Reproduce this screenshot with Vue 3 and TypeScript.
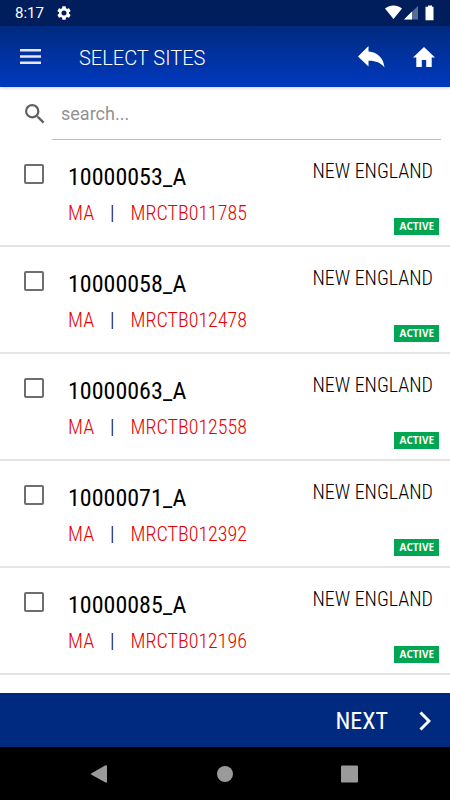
<script setup lang="ts">
import { ref } from 'vue'

interface Site {
  id: string
  state: string
  code: string
  region: string
  status: string
  selected: boolean
}

const query = ref('')
const sites = ref<Site[]>([
  { id: '10000053_A', state: 'MA', code: 'MRCTB011785', region: 'NEW ENGLAND', status: 'ACTIVE', selected: false },
  { id: '10000058_A', state: 'MA', code: 'MRCTB012478', region: 'NEW ENGLAND', status: 'ACTIVE', selected: false },
  { id: '10000063_A', state: 'MA', code: 'MRCTB012558', region: 'NEW ENGLAND', status: 'ACTIVE', selected: false },
  { id: '10000071_A', state: 'MA', code: 'MRCTB012392', region: 'NEW ENGLAND', status: 'ACTIVE', selected: false },
  { id: '10000085_A', state: 'MA', code: 'MRCTB012196', region: 'NEW ENGLAND', status: 'ACTIVE', selected: false },
])
</script>

<template>
  <div class="screen">
    <div class="status-bar">
      <span class="clock">8:17</span>
      <svg class="gear" viewBox="2 2 20 20" aria-hidden="true">
        <path d="M19.14 12.94c.04-.3.06-.61.06-.94 0-.32-.02-.64-.07-.94l2.03-1.58c.18-.14.23-.41.12-.61l-1.92-3.32c-.12-.22-.37-.29-.59-.22l-2.39.96c-.5-.38-1.03-.7-1.62-.94l-.36-2.54c-.04-.24-.24-.41-.48-.41h-3.84c-.24 0-.43.17-.47.41l-.36 2.54c-.59.24-1.13.57-1.62.94l-2.39-.96c-.22-.08-.47 0-.59.22L2.74 8.87c-.12.21-.08.47.12.61l2.03 1.58c-.05.3-.09.63-.09.94s.02.64.07.94l-2.03 1.58c-.18.14-.23.41-.12.61l1.92 3.32c.12.22.37.29.59.22l2.39-.96c.5.38 1.03.7 1.62.94l.36 2.54c.05.24.24.41.48.41h3.84c.24 0 .44-.17.47-.41l.36-2.54c.59-.24 1.13-.56 1.62-.94l2.39.96c.22.08.47 0 .59-.22l1.92-3.32c.12-.22.07-.47-.12-.61l-2.01-1.58zM12 15.6A3.6 3.6 0 1 1 12 8.4a3.6 3.6 0 0 1 0 7.2z" />
      </svg>
      <svg class="signals" viewBox="0 0 50 16" aria-hidden="true">
        <path d="M0 3.500C5 -.5 12 -.5 17 3.500L8.500 14z" />
        <path d="M19 14.500L33 1v13.500z" opacity=".35" />
        <path d="M19 14.500L27 6.500v8z" />
        <path d="M43 .5h4v1.300h1.500v13.500h-8V1.800H43z" />
      </svg>
    </div>

    <header class="app-bar">
      <button class="icon-button" type="button" aria-label="Menu">
        <svg class="menu-icon" viewBox="0 0 21 15" aria-hidden="true">
          <path d="M0 0h21v2.500H0zM0 6.200h21v2.500H0zM0 12.500h21V15H0z" />
        </svg>
      </button>
      <h1>SELECT SITES</h1>
      <button class="icon-button" type="button" aria-label="Back">
        <svg class="reply-icon" viewBox="0 0 27 22" aria-hidden="true">
          <path d="M0 10.500L10.500 0v5.500C19 6 25.500 11.500 26.500 21.500C22.500 16.500 17 14.500 10.500 14.800v5.700z" />
        </svg>
      </button>
      <button class="icon-button" type="button" aria-label="Home">
        <svg class="home-icon" viewBox="2 3 20 17" preserveAspectRatio="none" aria-hidden="true">
          <path d="M10 20v-6h4v6h5v-8h3L12 3 2 12h3v8z" />
        </svg>
      </button>
    </header>

    <main>
      <div class="search">
        <label for="site-search" aria-label="Search sites">
          <svg viewBox="3 3 18 18" aria-hidden="true">
            <path d="M15.500 14h-.79l-.28-.27A6.470 6.470 0 0 0 16 9.500 6.500 6.500 0 1 0 9.500 16c1.610 0 3.090-.59 4.230-1.570l.27.28v.79l5 4.990L20.490 19zM9.500 14a4.500 4.500 0 1 1 0-9 4.500 4.500 0 0 1 0 9z" />
          </svg>
        </label>
        <input id="site-search" v-model="query" type="text" placeholder="search..." />
      </div>

      <ul class="sites">
        <li v-for="site in sites" :key="site.id">
          <input :id="site.id" v-model="site.selected" type="checkbox" />
          <label class="info" :for="site.id">
            <span class="name">{{ site.id }}</span>
            <span class="codes">
              <span>{{ site.state }}</span>
              <span class="bar">|</span>
              <span>{{ site.code }}</span>
            </span>
          </label>
          <div class="side">
            <span class="region">{{ site.region }}</span>
            <span class="badge">{{ site.status }}</span>
          </div>
        </li>
      </ul>
    </main>

    <button class="next" type="button">
      NEXT
      <svg viewBox="0 0 12 20" aria-hidden="true">
        <path d="M1.500 1.500L10 10L1.500 18.500" fill="none" stroke="currentColor" stroke-width="3" />
      </svg>
    </button>

    <nav class="system-nav" aria-label="System navigation">
      <button type="button" aria-label="System back">
        <svg viewBox="0 0 18 18" aria-hidden="true"><path d="M.5 8.300L14.500 .3Q16 0 16 1.200V16.800Q16 18 14.500 17.600L.5 9.700Q-.5 9 .5 8.300z" /></svg>
      </button>
      <button type="button" aria-label="System home">
        <svg viewBox="0 0 18 18" aria-hidden="true"><circle cx="9" cy="9" r="8" /></svg>
      </button>
      <button type="button" aria-label="Recent apps">
        <svg viewBox="0 0 18 18" aria-hidden="true"><rect x="0" y=".5" width="17" height="17" rx="1" /></svg>
      </button>
    </nav>
  </div>
</template>

<style>
body {
  margin: 0;
  background: #fff;
}
</style>

<style scoped>
.screen {
  display: flex;
  flex-direction: column;
  min-height: 100vh;
  font-family: "Roboto Condensed", Roboto, sans-serif;
  color: #000;
}

.screen * {
  box-sizing: border-box;
}

button {
  padding: 0;
  border: 0;
  background: none;
  color: inherit;
  font: inherit;
}

svg {
  display: block;
  fill: currentColor;
}

.status-bar {
  display: flex;
  align-items: center;
  gap: 13px;
  height: 26px;
  padding: 0 15px;
  background: #001e5c;
  color: #fff;
}

.clock {
  font: 450 15px/26px Roboto, sans-serif;
}

.gear {
  width: 14px;
  height: 14px;
}

.signals {
  width: 50px;
  height: 16px;
  margin-left: auto;
}

.app-bar {
  display: flex;
  align-items: center;
  height: 61px;
  padding: 0 15px 0 20px;
  background: linear-gradient(#002a80, #0039be);
  color: #fff;
  box-shadow: 0 1px 3px rgba(0, 0, 0, 0.2);
}

.menu-icon {
  width: 21px;
  height: 15px;
  color: #e6e6f5;
}

h1 {
  flex: 1;
  margin: 0;
  padding: 2px 0 0 38px;
  font: 350 20px/24px Roboto, sans-serif;
}

.reply-icon {
  width: 27px;
  height: 22px;
}

.home-icon {
  width: 22px;
  height: 20px;
  margin-left: 28px;
}

main {
  flex: 1;
}

.search {
  display: flex;
  align-items: center;
  height: 53px;
  padding: 0 9px 0 25px;
}

.search svg {
  width: 20px;
  height: 20px;
  color: #616161;
}

.search input {
  flex: 1;
  align-self: stretch;
  min-width: 0;
  margin-left: 7px;
  padding: 2px 9px 0;
  border: 0;
  border-bottom: 1px solid #bdbdbd;
  outline: 0;
  background: none;
  font: 400 18px/24px Roboto, sans-serif;
}

.search input::placeholder {
  color: #929292;
}

.sites {
  margin: 0;
  padding: 0;
  list-style: none;
}

.sites li {
  display: flex;
  height: 107px;
  border-bottom: 2px solid #e4e4e4;
}

.sites input {
  appearance: none;
  width: 20px;
  height: 20px;
  margin: 24px 0 0 24px;
  border: 2px solid #6e6e6e;
  border-radius: 2px;
}

.sites input:checked {
  background: #002a80;
}

.info {
  flex: 1;
  padding: 21px 0 0 24px;
}

.name {
  display: block;
  font-size: 24px;
  font-weight: 380;
  line-height: 32px;
}

.codes {
  display: flex;
  gap: 16px;
  padding-top: 8px;
  color: #e80000;
  font-size: 20px;
  font-weight: 350;
  line-height: 24px;
}

.bar {
  color: #000;
}

.side {
  display: flex;
  flex-direction: column;
  align-items: flex-end;
  justify-content: space-between;
  padding: 19px 11px 10px 0;
}

.region {
  padding-right: 6px;
  font-size: 20px;
  font-weight: 350;
  line-height: 24px;
}

.badge {
  padding: 0 5px 0 6px;
  background: #00a651;
  color: #fff;
  font: 700 10px/17px "Open Sans", sans-serif;
}

.next {
  display: flex;
  align-items: center;
  justify-content: flex-end;
  gap: 31px;
  height: 54px;
  padding: 2px 19px 0 0;
  background: #002a80;
  color: #fff;
  font-size: 24px;
}

.next svg {
  width: 12px;
  height: 20px;
}

.system-nav {
  display: flex;
  justify-content: center;
  gap: 107px;
  height: 53px;
  background: #000;
  color: #9a9a9a;
}

.system-nav svg {
  width: 18px;
  height: 18px;
}
</style>
